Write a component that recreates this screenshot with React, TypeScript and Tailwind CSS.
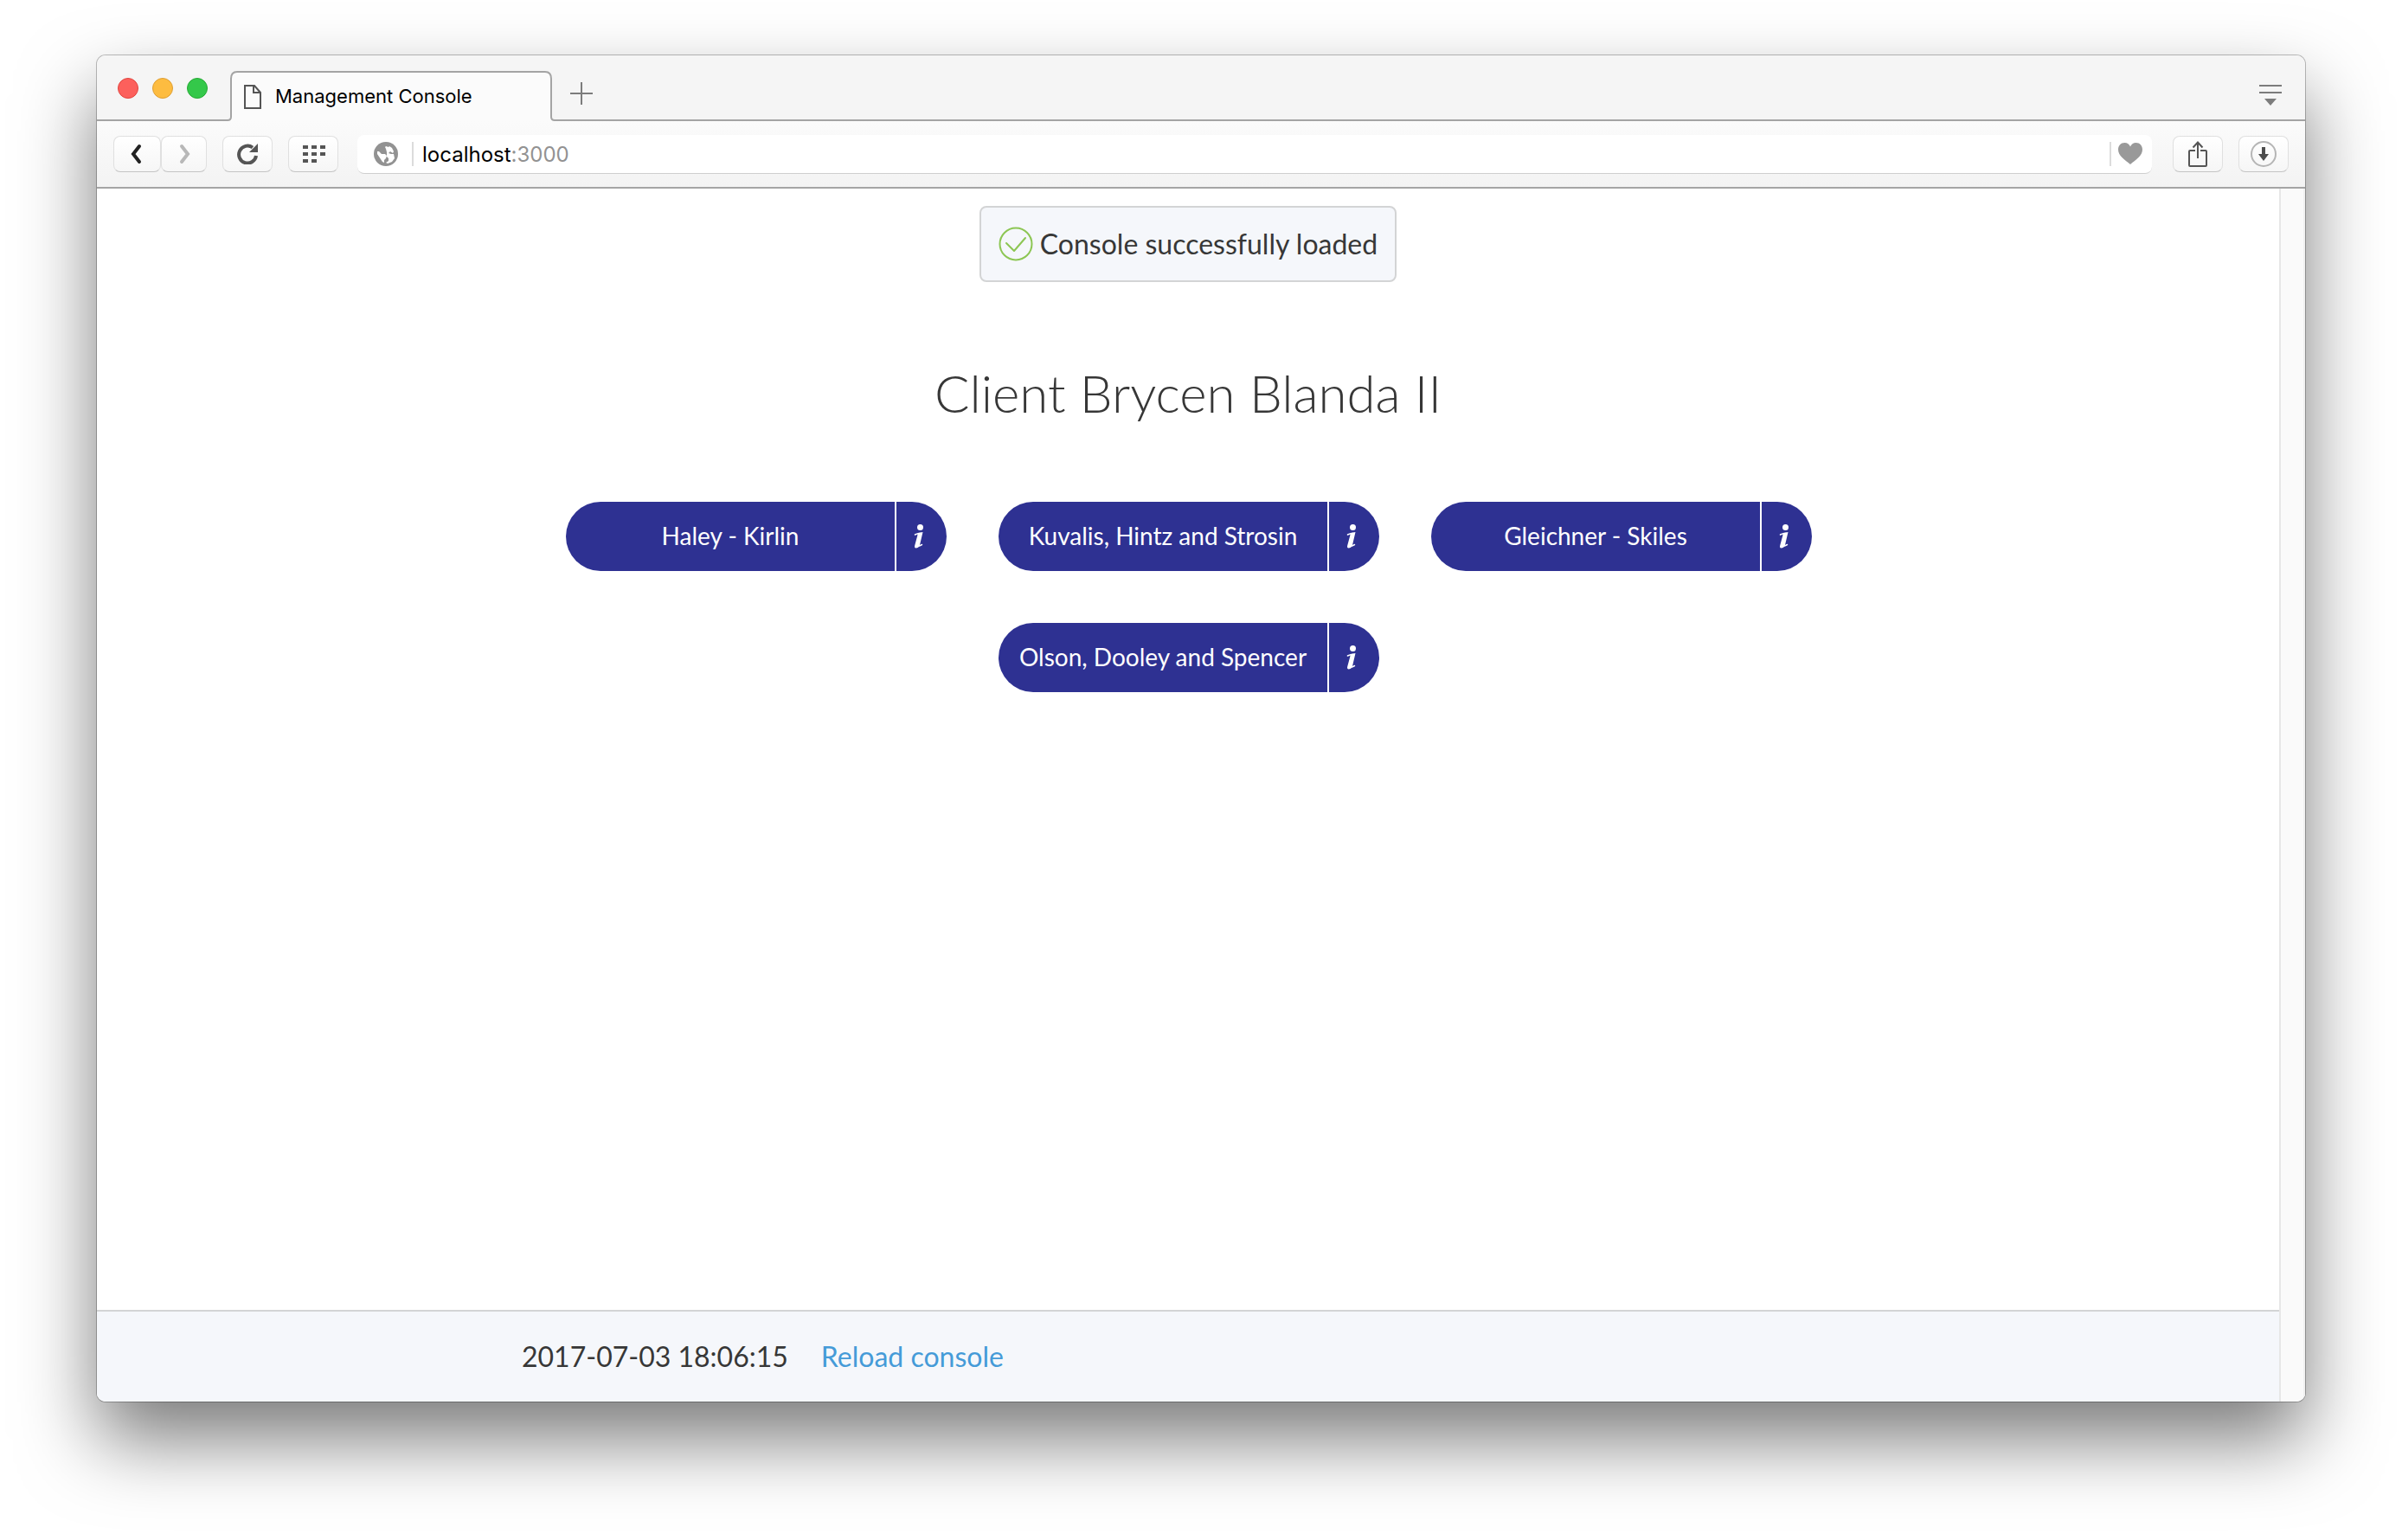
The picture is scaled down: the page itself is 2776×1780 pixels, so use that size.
const services = ["Haley - Kirlin", "Kuvalis, Hintz and Strosin", "Gleichner - Skiles", "Olson, Dooley and Spencer"];

const toolButton =
  "flex h-[42px] items-center justify-center rounded-lg border border-[#e0e0e0] border-b-[#c4c4c4] bg-linear-to-b from-white to-[#f6f6f6]";

function TabStrip() {
  return (
    <div className="flex h-[76px] items-stretch bg-[#f5f5f5]">
      <div className="flex w-[150px] gap-4 border-b-2 border-[#a4a4a4] pl-6 pt-[26px]">
        <button aria-label="Close window" className="size-6 rounded-full border border-[#e2453f] bg-[#fc605c]" />
        <button aria-label="Minimize window" className="size-6 rounded-full border border-[#de9f34] bg-[#fdbc40]" />
        <button aria-label="Zoom window" className="size-6 rounded-full border border-[#27aa35] bg-[#34c84a]" />
      </div>
      <svg className="mt-[18px] h-[58px] w-3 shrink-0" viewBox="0 0 12 58" fill="none">
        <path d="M0 57h1q4 0 4-4V9q0-8 7-8v57H0z" fill="#fbfbfb" />
        <path d="M0 57h1q4 0 4-4V9q0-8 7-8" stroke="#a4a4a4" strokeWidth="2" />
      </svg>
      <div className="mt-[18px] flex w-[356px] items-center gap-4 border-t-2 border-[#a4a4a4] bg-[#fbfbfb] pl-2">
        <svg className="h-7 w-5" viewBox="0 0 20 28" fill="none" stroke="#555" strokeWidth="2">
          <path d="M1 1h11l7 8v18H1z" />
          <path d="M11 1v8h8" />
        </svg>
        <span className="pb-0.5 font-['Inter',sans-serif] text-[22px] leading-7 text-black">Management Console</span>
      </div>
      <svg className="mt-[18px] h-[58px] w-3 shrink-0" viewBox="0 0 12 58" fill="none">
        <path d="M12 57h-1q-4 0-4-4V9q0-8-7-8v57h12z" fill="#fbfbfb" />
        <path d="M12 57h-1q-4 0-4-4V9q0-8-7-8" stroke="#a4a4a4" strokeWidth="2" />
      </svg>
      <div className="flex grow items-start justify-between border-b-2 border-[#a4a4a4] pl-[17px] pr-[27px] pt-[31px]">
        <button aria-label="New tab">
          <svg className="size-[26px]" viewBox="0 0 26 26" stroke="#7c7c7c" strokeWidth="2">
            <path d="M13 0v26M0 13h26" />
          </svg>
        </button>
        <button aria-label="Tab menu">
          <svg className="h-[30px] w-[26px]" viewBox="0 0 26 30">
            <path d="M0 3h26v2H0zM0 11h26v2H0zM6 19h14l-7 8z" fill="#7c7c7c" />
          </svg>
        </button>
      </div>
    </div>
  );
}

function Toolbar() {
  return (
    <div className="flex h-[78px] items-center border-b-2 border-[#a4a4a4] bg-linear-to-b from-[#fbfbfb] to-[#f3f3f3] pl-[19px] pr-[19px]">
      <button aria-label="Back" className={`${toolButton} w-[55px]`}>
        <svg className="h-6 w-4" viewBox="0 0 16 24" fill="none" stroke="#222" strokeWidth="4" strokeLinecap="round">
          <path d="M10 3L3 12l7 9" />
        </svg>
      </button>
      <button aria-label="Forward" className={`${toolButton} w-[53px]`}>
        <svg className="h-6 w-4" viewBox="0 0 16 24" fill="none" stroke="#b8b8b8" strokeWidth="4" strokeLinecap="round">
          <path d="M5 3l7 9-7 9" />
        </svg>
      </button>
      <button aria-label="Reload" className={`${toolButton} ml-[18px] w-[58px]`}>
        <svg className="size-6" viewBox="0 0 24 24" fill="none">
          <path d="M18 4.500A10 10 0 1 0 22 14" stroke="#555" strokeWidth="4" />
          <path d="M24 0v10H14z" fill="#555" />
        </svg>
      </button>
      <button aria-label="Speed dial" className={`${toolButton} ml-[18px] w-[58px] pl-0.5`}>
        <svg className="h-5 w-[26px]" viewBox="0 0 26 20" fill="#555">
          <path d="M0 0h6v4H0zM10 0h6v4h-6zM20 0h6v4h-6zM0 8h6v4H0zM10 8h6v4h-6zM20 8h6v4h-6zM0 16h6v4H0zM10 16h6v4h-6z" />
        </svg>
      </button>
      <div className="ml-[22px] flex h-[45px] grow items-center rounded-lg border-b border-[#cfcfcf] bg-white pl-[19px] pr-[11px]">
        <svg className="size-7 shrink-0" viewBox="0 0 28 28">
          <circle cx="14" cy="14" r="14" fill="#929292" />
          <path
            d="M4 11l2 0 3 3 4 0 2 2-1 3-2 2 0 3-2-1-4-6-2-3zM14 5l3 1 1-1 3 2 2 4-1 2-3-2-2 2 3 1 3 0 1 5-3 4-5 2-2-1 3-2 0-3-2-2 0-5-1-4-1-2z"
            fill="#fff"
          />
        </svg>
        <div className="ml-4 h-7 w-0.5 bg-[#dcdcdc]" />
        <div className="ml-[10px] grow pt-0.5 font-['Inter',sans-serif] text-[24px] leading-8 text-black">
          localhost<span className="text-[#929292]">:3000</span>
        </div>
        <div className="h-7 w-0.5 bg-[#dcdcdc]" />
        <button aria-label="Bookmark" className="ml-2">
          <svg className="h-[25px] w-7" viewBox="0 0 28 25">
            <path d="M14 25C8 20 0 15 0 8c0-4.500 3-8 7.500-8C10.500 0 13 2 14 4.500 15 2 17.500 0 20.500 0 25 0 28 3.500 28 8c0 7-8 12-14 17z" fill="#999" />
          </svg>
        </button>
      </div>
      <button aria-label="Share" className={`${toolButton} ml-6 w-[58px]`}>
        <svg className="h-[30px] w-[22px]" viewBox="0 0 22 30" fill="none" stroke="#555" strokeWidth="2">
          <path d="M8 11H2q-1 0-1 1v16q0 1 1 1h18q1 0 1-1V12q0-1-1-1h-6M11 20V1M5.500 7.500L11 1.500l5.500 6" />
        </svg>
      </button>
      <button aria-label="Downloads" className={`${toolButton} ml-[18px] w-[58px]`}>
        <svg className="size-[30px]" viewBox="0 0 30 30" fill="none">
          <circle cx="15" cy="15" r="14" stroke="#b5b5b5" strokeWidth="2" />
          <path d="M13 7h4v8h4l-6 8-6-8h4z" fill="#4c4c4c" />
        </svg>
      </button>
    </div>
  );
}

function InfoIcon() {
  return (
    <svg className="h-[30px] w-3" viewBox="0 0 12 30" fill="none">
      <circle cx="7.500" cy="4.500" r="3.500" fill="#fff" />
      <path d="M1.500 13Q4 11.500 7.500 11.500L4.200 25.500Q4 27.500 9.500 24.500" stroke="#fff" strokeWidth="1.500" strokeLinecap="round" />
      <path d="M4.500 11l6-1L7 25q-1.500 3.500-4.500 3.500Q.5 28.500 1.200 25.500L4.300 14z" fill="#fff" />
    </svg>
  );
}

function ServiceButton({ name }: { name: string }) {
  return (
    <div className="flex h-20 w-[440px] gap-0.5 text-white">
      <button className="grow rounded-l-full bg-[#2e3192] pb-0.5 text-[28px]">{name}</button>
      <button aria-label={`About ${name}`} className="flex w-[58px] items-center rounded-r-full bg-[#2e3192] pl-5">
        <InfoIcon />
      </button>
    </div>
  );
}

export default function App() {
  return (
    <div className="flex h-screen flex-col bg-white px-28 pb-40 pt-16 font-['Lato',sans-serif]">
      <div className="flex grow flex-col overflow-hidden rounded-[10px] shadow-[0_0_0_1px_rgba(0,0,0,0.25),0_44px_88px_rgba(0,0,0,0.52)]">
        <TabStrip />
        <Toolbar />
        <div className="flex grow bg-white text-[#373737]">
          <div className="flex grow flex-col">
            <main className="flex grow flex-col items-center pt-5">
              <div role="status" className="flex h-[88px] items-center gap-2 rounded-lg border-2 border-[#d3d4d5] bg-[#f5f7fb] px-5 text-[32px]">
                <svg className="size-10" viewBox="0 0 40 40" fill="none" stroke="#8cc653" strokeWidth="2" strokeLinecap="round" strokeLinejoin="round">
                  <circle cx="20" cy="20" r="18.500" />
                  <path d="M9 19l9 9 13-15" />
                </svg>
                Console successfully loaded
              </div>
              <h1 className="mt-[92px] text-[60px] font-light leading-[72px]">Client Brycen Blanda II</h1>
              <div className="mt-[90px] flex max-w-[1442px] flex-wrap justify-center gap-[60px] pl-0.5">
                {services.map((name) => (
                  <ServiceButton key={name} name={name} />
                ))}
              </div>
            </main>
            <footer className="flex h-[106px] items-center border-t-2 border-[#d3d4d5] bg-[#f5f7fb] text-[32px]">
              <div className="mx-auto flex w-[1540px] gap-[38px]">
                <time>2017-07-03 18:06:15</time>
                <a href="#reload" className="text-[#459bd8]">Reload console</a>
              </div>
            </footer>
          </div>
          <div className="w-[30px] border-l-2 border-r-2 border-l-[#e7e7e7] border-r-[#f1f1f1] bg-[#fafafa]" />
        </div>
      </div>
    </div>
  );
}
